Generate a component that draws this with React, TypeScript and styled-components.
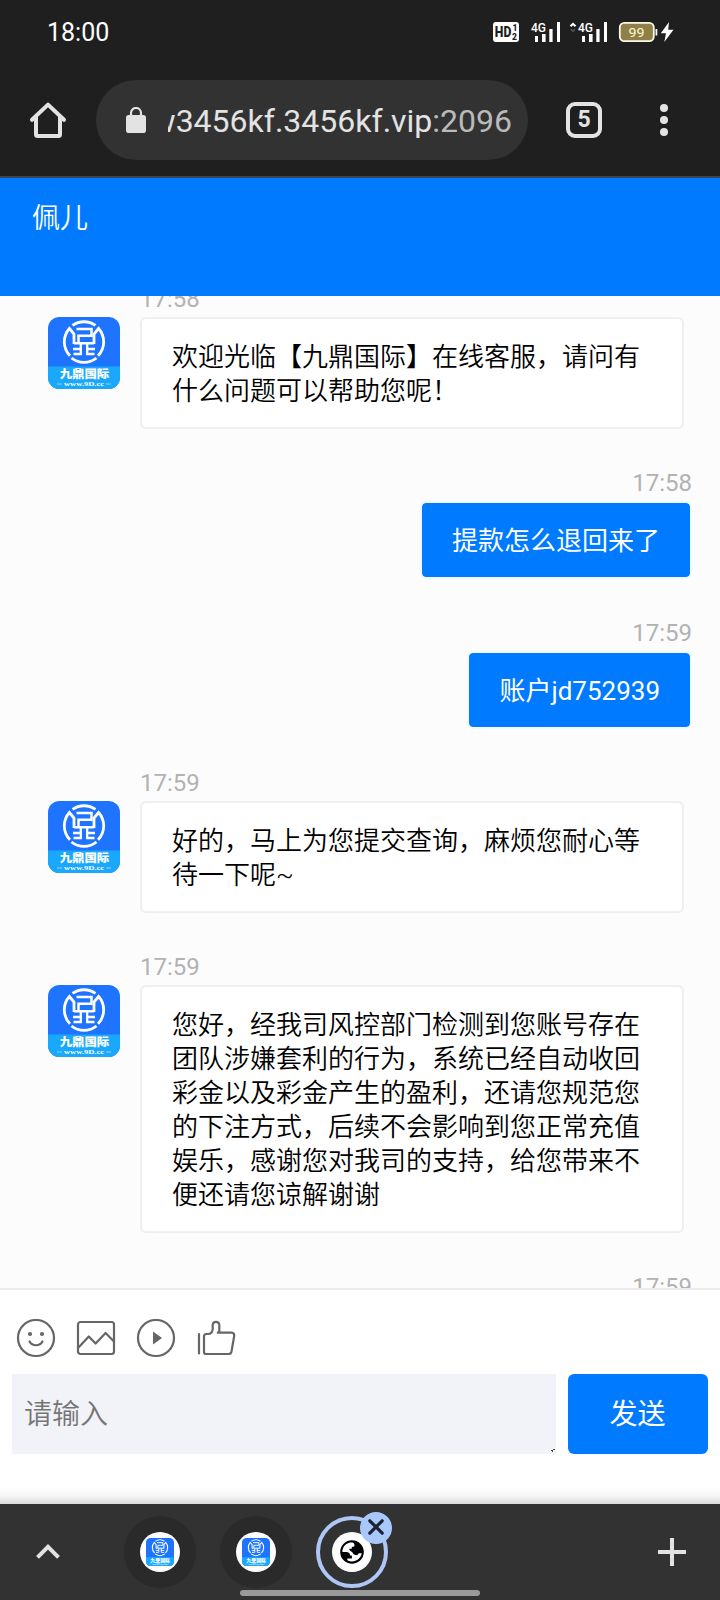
import React from "react";
import styled, { createGlobalStyle, css } from "styled-components";

const GlobalStyle = createGlobalStyle`
  * { box-sizing: border-box; }
  body { margin: 0; background: #fcfcfc; }
  button, textarea { font: inherit; border: 0; padding: 0; margin: 0; background: none; }
`;

const Screen = styled.div`
  width: 720px;
  height: 1600px;
  display: flex;
  flex-direction: column;
  overflow: hidden;
  font-family: Roboto, "Noto Sans CJK SC", sans-serif;
`;

const StatusBar = styled.div`
  height: 64px;
  flex: none;
  display: flex;
  align-items: center;
  justify-content: space-between;
  padding: 0 46px 0 47px;
  background: #1f1f1f;
  color: #fff;
`;

const Clock = styled.span`
  padding-top: 2px;
  font-size: 25px;
  line-height: 30px;
`;

const BrowserBar = styled.div`
  height: 114px;
  flex: none;
  display: flex;
  align-items: center;
  padding: 0 52px 0 28px;
  background: #1f1f1f;
  border-bottom: 2px solid #3c4654;
`;

const AddressPill = styled.div`
  width: 432px;
  height: 80px;
  margin-left: 28px;
  padding: 0 16px 0 30px;
  border-radius: 40px;
  background: #323232;
  display: flex;
  align-items: center;
`;

const Url = styled.div`
  width: 344px;
  margin-left: 22px;
  padding-top: 2px;
  overflow: hidden;
  display: flex;
  justify-content: flex-end;
  white-space: nowrap;
  font-size: 32px;
  line-height: 44px;
  color: #e3e3e3;
`;

const Port = styled.span`
  color: #bababa;
`;

const TabCount = styled.button`
  width: 36px;
  height: 36px;
  margin-left: 38px;
  border: 4px solid #e3e3e3;
  border-radius: 9px;
  color: #e3e3e3;
  font-size: 23px;
  font-weight: 700;
  line-height: 28px;
  text-align: center;
`;

const MenuButton = styled.button`
  margin-left: auto;
  display: flex;
  flex-direction: column;
  gap: 4px;
`;

const Dot = styled.span`
  width: 8px;
  height: 8px;
  border-radius: 50%;
  background: #e3e3e3;
`;

const ChatHeader = styled.header`
  height: 118px;
  flex: none;
  padding: 22px 32px;
  background: #007aff;
  color: #fff;
  font-size: 28px;
  line-height: 38px;
  font-weight: 350;
`;

const Conversation = styled.main`
  height: 992px;
  flex: none;
  overflow: hidden;
  padding: 0 28px 0 48px;
  background: #fcfcfc;
`;

const Thread = styled.div`
  margin-top: -15px;
  display: flex;
  flex-direction: column;
  gap: 36px;
`;

const Message = styled.article<{ $own?: boolean }>`
  display: flex;
  flex-direction: column;
  align-items: ${(p) => (p.$own ? "flex-end" : "flex-start")};
`;

const Time = styled.time<{ $own?: boolean }>`
  margin-left: ${(p) => (p.$own ? "0" : "92px")};
  font-size: 24px;
  line-height: 36px;
  color: #b2b2b2;
`;

const MessageRow = styled.div`
  display: flex;
  align-items: flex-start;
  gap: 20px;
`;

const Bubble = styled.div<{ $own?: boolean }>`
  padding: 21px 30px 19px;
  border: 2px solid #efefef;
  border-radius: 6px;
  background: #fff;
  color: #000;
  font-size: 26px;
  line-height: 34px;
  font-weight: 350;
  ${(p) =>
    p.$own
      ? css`
          border-color: #eefaff;
          background: #007aff;
          background-clip: padding-box;
          color: #fff;
          font-weight: 400;
        `
      : css`
          width: 544px;
        `}
`;

const Composer = styled.section`
  height: 216px;
  flex: none;
  padding: 29px 12px 0;
  border-top: 2px solid #ebebeb;
  background: linear-gradient(#fff 0 198px, #f6f6f6 206px, #d8dad9 214px);
`;

const Tools = styled.div`
  display: flex;
  gap: 20px;
  padding-left: 4px;
`;

const InputRow = styled.div`
  display: flex;
  gap: 12px;
  margin-top: 15px;
`;

const Input = styled.textarea`
  display: block;
  width: 544px;
  height: 80px;
  padding: 21px 12px 19px;
  background: #f2f3f8;
  font-size: 28px;
  font-weight: 350;
  line-height: 40px;
  resize: none;
  outline: none;
  overflow: hidden;
  &::placeholder { color: #757575; opacity: 1; }
`;

const SendButton = styled.button`
  width: 140px;
  height: 80px;
  padding: 1px 1px 0 0;
  border-radius: 6px;
  background: #007aff;
  color: #fff;
  font-size: 28px;
  font-weight: 400;
  line-height: 79px;
`;

const InputBox = styled.div`
  position: relative;
  width: 544px;
`;

const ResizeGrip = styled.svg`
  position: absolute;
  right: 1px;
  bottom: 1px;
`;

const TabStrip = styled.nav`
  position: relative;
  height: 96px;
  flex: none;
  display: flex;
  align-items: center;
  padding: 0 34px;
  background: #323232;
`;

const TabList = styled.div`
  display: flex;
  gap: 24px;
  margin: 0 auto 0 62px;
`;

const Tab = styled.div<{ $active?: boolean }>`
  position: relative;
  width: 72px;
  height: 72px;
  border-radius: 50%;
  display: flex;
  align-items: center;
  justify-content: center;
  background: ${(p) => (p.$active ? "#323232" : "#2a2a2a")};
  border: ${(p) => (p.$active ? "4px solid #aec6f6" : "0")};
`;

const Favicon = styled.div`
  width: 40px;
  height: 40px;
  border-radius: 50%;
  background: #fff;
  display: flex;
  align-items: center;
  justify-content: center;
`;

const CloseBadge = styled.button`
  position: absolute;
  top: -8px;
  right: -8px;
  width: 32px;
  height: 32px;
  padding-bottom: 2px;
  border-radius: 50%;
  background: #a8c7fa;
  display: flex;
  align-items: center;
  justify-content: center;
`;

const HomeIndicator = styled.div`
  position: absolute;
  left: 240px;
  bottom: 4px;
  width: 240px;
  height: 6px;
  border-radius: 3px;
  background: #999;
`;

const LogoSvg = styled.svg`
  flex: none;
  border-radius: 16%;
`;

const Logo = ({ size = 72 }: { size?: number }) => (
  <LogoSvg width={size} height={size} viewBox="0 0 72 72">
    <rect width="72" height="72" fill="#1f74ff" />
    <rect y="49.5" width="72" height="22.5" fill="#1aa8fd" />
    <g fill="none" stroke="#fff" strokeWidth="2.8">
      <path d="M24.500 8.400A20 20 0 0 1 47.500 8.400" />
      <path d="M23.500 41A20 20 0 0 0 48.500 41" />
      <path d="M26 27V17L21.400 11.500A20 20 0 0 0 22 38.800" />
      <path d="M46 27V17L50.600 11.500A20 20 0 0 1 50 38.800" />
      <path d="M28.500 12H43.500V18.800H30.500V26" strokeWidth="2.500" />
      <path d="M26 26.200H46" strokeWidth="2.500" />
      <path d="M25 32H32.800V26.500M32.800 30V37H25.500M47 32H39.200V26.500M39.200 30V37H46.500" strokeWidth="2.300" />
    </g>
    <text x="11.700" y="60.600" textLength="49.500" lengthAdjust="spacingAndGlyphs" fontFamily='"Noto Sans CJK SC", sans-serif' fontWeight="900" fontSize="11.500" fill="#fff">
      九鼎国际
    </text>
    <text x="16" y="69" textLength="40" lengthAdjust="spacingAndGlyphs" fontFamily='"Liberation Serif", serif' fontWeight="700" fontSize="7" fill="#fff">
      www.9D.cc
    </text>
    <path d="M9 67H14M58 67H63" stroke="#8bd3fe" strokeWidth="1" />
  </LogoSvg>
);

const HomeIcon = () => (
  <svg width="40" height="40" viewBox="0 0 40 40" fill="none" stroke="#e3e3e3" strokeWidth="4" strokeLinejoin="round" strokeLinecap="round">
    <path d="M4 19.800L20 4.600L36 19.800" />
    <path d="M8 17V34.600Q8 36 9.400 36H30.600Q32 36 32 34.600V17" />
  </svg>
);

const LockIcon = () => (
  <svg width="20" height="26" viewBox="0 0 20 26">
    <path d="M5 10V6A5 5 0 0 1 15 6V10" fill="none" stroke="#e3e3e3" strokeWidth="2.2" />
    <rect y="8" width="20" height="18" rx="2.8" fill="#e3e3e3" />
  </svg>
);

const StatusIcons = () => (
  <svg width="182" height="24" viewBox="0 0 182 24" fontFamily="Roboto, sans-serif">
    <rect x="1" y="2" width="26" height="20" rx="3" fill="#fff" />
    <g fill="#1f1f1f" fontWeight="900">
      <text x="2.8" y="17.400" fontSize="15" textLength="16.500" lengthAdjust="spacingAndGlyphs">HD</text>
      <text x="20.500" y="10.900" fontSize="8.500">1</text>
      <text x="20" y="20" fontSize="8.500">2</text>
    </g>
    <g fill="#fff">
      <text x="39" y="11.800" fontSize="12.500" fontWeight="500" textLength="15" lengthAdjust="spacingAndGlyphs">4G</text>
      <path d="M43 16h3v6h-3zM50 14h3.600v8H50zM57.300 9h3.300v13h-3.300zM65 2h3v20h-3z" />
      <text x="86" y="11.800" fontSize="12.500" fontWeight="500" textLength="15" lengthAdjust="spacingAndGlyphs">4G</text>
      <path d="M90 16h3v6h-3zM97 14h3.600v8H97zM104.300 9h3.300v13h-3.300zM112 2h3v20h-3z" />
    </g>
    <path d="M78.500 6.300L81 3.800L83.500 6.300" fill="none" stroke="#fff" strokeWidth="2" />
    <path d="M79 9.200L81 11.200L83 9.200" fill="none" stroke="#555" strokeWidth="1.6" />
    <rect x="127.800" y="2.800" width="34" height="18.400" rx="4.600" fill="#8f8049" stroke="#fbf8e4" strokeWidth="1.8" />
    <path d="M163.500 9v6.500h1.800V9z" fill="#fff" />
    <text x="144.600" y="16.900" fontSize="13.500" fill="#fff8d2" textAnchor="middle" textLength="16" lengthAdjust="spacingAndGlyphs">99</text>
    <path d="M177 2L168.800 13.200H174L172.300 22L181.500 9.800H176.200Z" fill="#fff" />
  </svg>
);

const ToolIcon = styled.svg.attrs({ width: 40, height: 40, viewBox: "0 -1 40 40" })`
  flex: none;
  fill: none;
  stroke: #666;
  stroke-width: 2.2;
  stroke-linecap: round;
  stroke-linejoin: round;
`;

const Gray = styled.g`
  fill: #666;
  stroke: none;
`;

const GlobeIcon = () => (
  <svg width="24" height="24" viewBox="0 0 24 24">
    <circle cx="12" cy="12" r="11.8" fill="#000" />
    <path
      d="M12.8 2.6C9 1.8 4.500 4.200 2.900 8.400C2.500 9.500 2.300 10.900 2.300 12H6.200C8.700 12 10.200 13.600 10.200 15.600H11.900V18.400H7.600C6.800 18.400 7.200 20.200 8.200 20.700C11 22 15.700 21.700 18.500 19C20.600 17 21.600 14.700 21.700 13.200H18.600C18 15.200 16.300 15.500 14.700 14.800C12.800 14 13 12.400 11.700 11.700C10.500 11 9.300 10.300 9.200 8.700H11.800V6.800H13.600C14.900 6.800 14.900 3.800 12.800 2.600Z"
      fill="#fff"
    />
  </svg>
);

type Entry = { time: string; text?: string; own?: boolean };

const entries: Entry[] = [
  { time: "17:58", text: "欢迎光临【九鼎国际】在线客服，请问有什么问题可以帮助您呢！" },
  { time: "17:58", text: "提款怎么退回来了", own: true },
  { time: "17:59", text: "账户jd752939", own: true },
  { time: "17:59", text: "好的，马上为您提交查询，麻烦您耐心等待一下呢~" },
  {
    time: "17:59",
    text: "您好，经我司风控部门检测到您账号存在团队涉嫌套利的行为，系统已经自动收回彩金以及彩金产生的盈利，还请您规范您的下注方式，后续不会影响到您正常充值娱乐，感谢您对我司的支持，给您带来不便还请您谅解谢谢",
  },
  { time: "17:59", own: true },
];

export default function App() {
  return (
    <Screen>
      <GlobalStyle />
      <StatusBar>
        <Clock>18:00</Clock>
        <StatusIcons />
      </StatusBar>
      <BrowserBar>
        <HomeIcon />
        <AddressPill>
          <LockIcon />
          <Url>
            <span>w3456kf.3456kf.vip</span>
            <Port>:2096</Port>
          </Url>
        </AddressPill>
        <TabCount>5</TabCount>
        <MenuButton aria-label="菜单">
          <Dot />
          <Dot />
          <Dot />
        </MenuButton>
      </BrowserBar>
      <ChatHeader>佩儿</ChatHeader>
      <Conversation>
        <Thread>
          {entries.map((m, i) => (
            <Message key={i} $own={m.own}>
              <Time $own={m.own}>{m.time}</Time>
              {m.text && (
                <MessageRow>
                  {!m.own && <Logo />}
                  <Bubble $own={m.own}>{m.text}</Bubble>
                </MessageRow>
              )}
            </Message>
          ))}
        </Thread>
      </Conversation>
      <Composer>
        <Tools>
          <ToolIcon>
            <circle cx="20" cy="18" r="18" />
            <path d="M13.600 21.500C16.200 26.500 23.800 26.500 26.400 21.500" />
            <Gray>
              <circle cx="14" cy="14" r="2.1" />
              <circle cx="26" cy="14" r="2.1" />
            </Gray>
          </ToolIcon>
          <ToolIcon>
            <rect x="2" y="2" width="36" height="32" rx="2.500" />
            <path d="M2.500 27.500L12.800 16.500L19.600 23.500L29.600 13L37.500 21" />
          </ToolIcon>
          <ToolIcon>
            <circle cx="20" cy="18" r="18" />
            <Gray>
              <path d="M17 11.600L26 18L17 24.400Z" />
            </Gray>
          </ToolIcon>
          <ToolIcon>
            <path d="M3 14V33.500" />
            <path d="M8 16.500Q8 14 10.500 14H12.500Q16.500 13.500 16.700 9V5Q17 1.800 20 1.800Q23 1.800 23.300 5V10.500Q23.300 12.700 21.800 12.700H35.500Q38.500 13 38.200 16L35.500 31.500Q35 34 32.500 34H10Q8 34 8 32Z" />
          </ToolIcon>
        </Tools>
        <InputRow>
          <InputBox>
            <Input placeholder="请输入" />
            <ResizeGrip width="5" height="5" viewBox="0 0 5 5">
              <path d="M1 2.500H3M3 1.500H5M2 3.500H3" stroke="#444" strokeWidth="1" />
            </ResizeGrip>
          </InputBox>
          <SendButton>发送</SendButton>
        </InputRow>
      </Composer>
      <TabStrip>
        <svg width="28" height="28" viewBox="0 0 28 28" fill="none" stroke="#e3e3e3" strokeWidth="4">
          <path d="M3.500 19.300L14 8.800L24.500 19.300" />
        </svg>
        <TabList>
          <Tab>
            <Favicon>
              <Logo size={28} />
            </Favicon>
          </Tab>
          <Tab>
            <Favicon>
              <Logo size={28} />
            </Favicon>
          </Tab>
          <Tab $active>
            <Favicon>
              <GlobeIcon />
            </Favicon>
            <CloseBadge aria-label="关闭">
              <svg width="16" height="16" viewBox="0 0 16 16" stroke="#1c2233" strokeWidth="3.200" strokeLinecap="round">
                <path d="M1.800 1.800L14.200 14.200M14.200 1.800L1.800 14.200" />
              </svg>
            </CloseBadge>
          </Tab>
        </TabList>
        <svg width="28" height="28" viewBox="0 0 28 28" stroke="#e3e3e3" strokeWidth="4">
          <path d="M14 0V28M0 14H28" />
        </svg>
        <HomeIndicator />
      </TabStrip>
    </Screen>
  );
}
